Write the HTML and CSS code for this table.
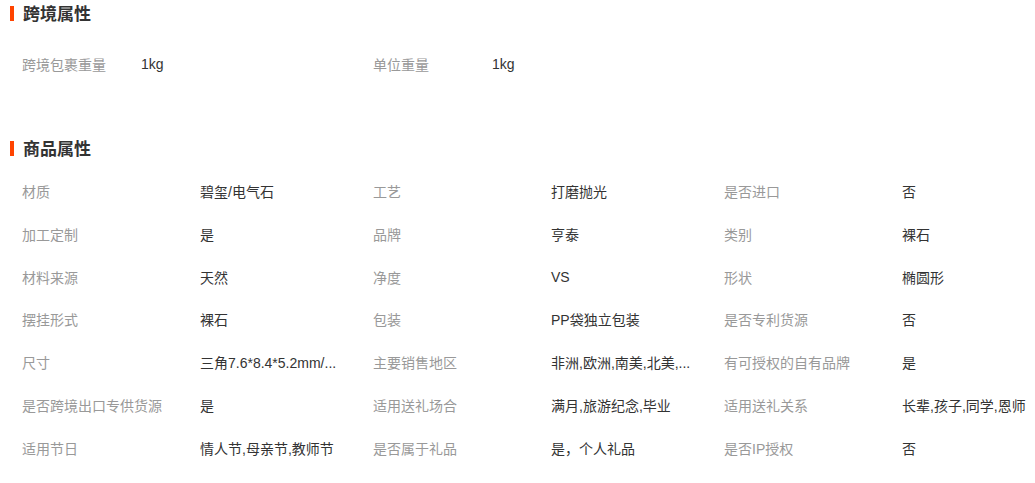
FILE: index.html
```html
<!DOCTYPE html>
<html lang="zh-CN">
<head>
    <meta charset="UTF-8">
    <meta name="viewport" content="width=device-width, initial-scale=1.0">
    <title>商品属性</title>
    <link rel="stylesheet" href="styles.css">
</head>
<body>
    <div class="attr-section cross-section">
        <h3 class="attr-title">跨境属性</h3>
        <ul class="attr-list cross-list">
            <li class="attr-item"><span class="attr-name">跨境包裹重量</span><span class="attr-value">1kg</span></li>
            <li class="attr-item"><span class="attr-name">单位重量</span><span class="attr-value">1kg</span></li>
        </ul>
    </div>

    <div class="attr-section goods-section">
        <h3 class="attr-title">商品属性</h3>
        <ul class="attr-list goods-list">
            <li class="attr-item"><span class="attr-name">材质</span><span class="attr-value">碧玺/电气石</span></li>
            <li class="attr-item"><span class="attr-name">工艺</span><span class="attr-value">打磨抛光</span></li>
            <li class="attr-item"><span class="attr-name">是否进口</span><span class="attr-value">否</span></li>
            <li class="attr-item"><span class="attr-name">加工定制</span><span class="attr-value">是</span></li>
            <li class="attr-item"><span class="attr-name">品牌</span><span class="attr-value">亨泰</span></li>
            <li class="attr-item"><span class="attr-name">类别</span><span class="attr-value">裸石</span></li>
            <li class="attr-item"><span class="attr-name">材料来源</span><span class="attr-value">天然</span></li>
            <li class="attr-item"><span class="attr-name">净度</span><span class="attr-value">VS</span></li>
            <li class="attr-item"><span class="attr-name">形状</span><span class="attr-value">椭圆形</span></li>
            <li class="attr-item"><span class="attr-name">摆挂形式</span><span class="attr-value">裸石</span></li>
            <li class="attr-item"><span class="attr-name">包装</span><span class="attr-value">PP袋独立包装</span></li>
            <li class="attr-item"><span class="attr-name">是否专利货源</span><span class="attr-value">否</span></li>
            <li class="attr-item"><span class="attr-name">尺寸</span><span class="attr-value">三角7.6*8.4*5.2mm/...</span></li>
            <li class="attr-item"><span class="attr-name">主要销售地区</span><span class="attr-value">非洲,欧洲,南美,北美,...</span></li>
            <li class="attr-item"><span class="attr-name">有可授权的自有品牌</span><span class="attr-value">是</span></li>
            <li class="attr-item"><span class="attr-name">是否跨境出口专供货源</span><span class="attr-value">是</span></li>
            <li class="attr-item"><span class="attr-name">适用送礼场合</span><span class="attr-value">满月,旅游纪念,毕业</span></li>
            <li class="attr-item"><span class="attr-name">适用送礼关系</span><span class="attr-value">长辈,孩子,同学,恩师</span></li>
            <li class="attr-item"><span class="attr-name">适用节日</span><span class="attr-value">情人节,母亲节,教师节</span></li>
            <li class="attr-item"><span class="attr-name">是否属于礼品</span><span class="attr-value">是，个人礼品</span></li>
            <li class="attr-item"><span class="attr-name">是否IP授权</span><span class="attr-value">否</span></li>
        </ul>
    </div>
</body>
</html>
```

FILE: styles.css
```css
body {
    margin: 0;
    overflow: hidden;
    background-color: #fff;
    font-family: "Liberation Sans", "Noto Sans CJK SC", sans-serif;
    font-size: 14px;
    color: #333;
}
.attr-title {
    display: flex;
    align-items: center;
    gap: 9px;
    margin: 0;
    padding-left: 10px;
    height: 24px;
    font-size: 17px;
    font-weight: bold;
    color: #333;
}
.attr-title::before {
    content: "";
    width: 4px;
    height: 15px;
    margin-top: 3px;
    background-color: #ff4400;
}
.attr-list {
    display: grid;
    grid-template-columns: repeat(3, 351px);
    margin: 0;
    padding: 0 0 0 22px;
    list-style: none;
}
.attr-item {
    display: flex;
    align-items: center;
    white-space: nowrap;
}
.attr-name {
    flex: none;
    width: 178px;
    color: #999;
}
.attr-value {
    color: #333;
}
.cross-list {
    margin-top: 18px;
    grid-auto-rows: 43px;
}
.cross-list .attr-name {
    width: 119px;
}
.goods-section {
    margin-top: 50px;
}
.goods-list {
    margin-top: 10.5px;
    grid-auto-rows: 42.83px;
}
```
